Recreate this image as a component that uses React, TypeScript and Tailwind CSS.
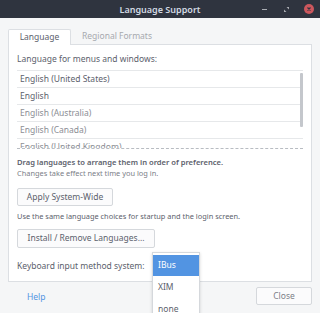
import React from "react";

const font = { fontFamily: '"Noto Sans", "Open Sans", sans-serif' };

export default function App() {
  return (
    <div className="relative w-[320px] h-[313px] overflow-hidden flex flex-col bg-[#f5f6f7] text-[#5c616c] text-[8.5px]" style={font}>
      {/* Title bar */}
      <div className="h-[18px] shrink-0 bg-[#2f343f] flex items-center relative">
        <div className="flex-1 text-center text-[9px] font-semibold text-[#d3dae3] leading-none">Language Support</div>
        <div className="absolute right-0 top-0 h-[18px] flex items-center">
          <div className="w-[5px] h-[1px] bg-[#a9acb2] mr-[17px]" />
          <svg width="5" height="5" viewBox="0 0 5 5" className="mr-[15px]">
            <path d="M0 5 L0 2.5 L2.5 5 Z M5 0 L5 2.5 L2.5 0 Z" fill="#a9acb2" />
          </svg>
          <div className="w-[10px] h-[10px] rounded-full bg-[#cc575d] flex items-center justify-center mr-[6px]">
            <svg width="6" height="6" viewBox="0 0 6 6">
              <path d="M1.5 1.5 L4.5 4.5 M4.5 1.5 L1.5 4.5" stroke="#2f343f" strokeWidth="1.2" />
            </svg>
          </div>
        </div>
      </div>

      {/* Body */}
      <div className="flex-1 flex flex-col px-[8px] pt-[11px]">
        {/* Tabs */}
        <div className="flex h-[15px] relative z-10">
          <div className="w-[63px] h-[16px] bg-white border border-b-0 border-[#dcdfe3] rounded-t-[2px] flex items-center justify-center">
            Language
          </div>
          <div className="ml-[11px] h-[15px] flex items-center text-[#a6a9ae]">Regional Formats</div>
        </div>

        {/* Panel */}
        <div className="h-[238px] shrink-0 bg-white border border-[#dcdfe3] px-[8px] pt-[8px] flex flex-col">
          <div className="h-[12px] leading-[12px] whitespace-nowrap">Language for menus and windows:</div>
          <div className="mt-[5px] h-[79px] shrink-0 overflow-hidden relative border-t border-[#e6e8ea] border-b border-b-[#b8bcc2] border-dashed" style={{ borderTopStyle: "solid" }}>
            {[
              ["English (United States)", "#5c616c"],
              ["English", "#5c616c"],
              ["English (Australia)", "#8b8e94"],
              ["English (Canada)", "#8b8e94"],
              ["English (United Kingdom)", "#8b8e94"],
            ].map(([t, c]) => (
              <div key={t} className="h-[17px] border-b border-[#e6e8ea] flex items-center pl-[3px] whitespace-nowrap" style={{ color: c }}>
                {t}
              </div>
            ))}
            <div className="absolute right-0 top-[2px] w-[3px] h-[54px] bg-[#c4c7cc] rounded-[1px]" />
          </div>

          <div className="mt-[7px] h-[12px] text-[7.6px] font-semibold leading-[12px] whitespace-nowrap">Drag languages to arrange them in order of preference.</div>
          <div className="h-[11px] text-[7.4px] leading-[11px] text-[#7c8088] whitespace-nowrap">Changes take effect next time you log in.</div>

          <div className="mt-[9px] w-[96px] h-[18px] shrink-0 border border-[#d5d8dc] rounded-[2px] bg-[#fbfbfc] flex items-center justify-center whitespace-nowrap">
            Apply System-Wide
          </div>
          <div className="mt-[5px] h-[11px] text-[7.4px] leading-[11px] whitespace-nowrap">Use the same language choices for startup and the login screen.</div>
          <div className="mt-[7px] w-[138px] h-[19px] shrink-0 border border-[#d5d8dc] rounded-[2px] bg-[#fbfbfc] flex items-center justify-center whitespace-nowrap">
            Install / Remove Languages...
          </div>

          <div className="mt-[12px] h-[12px] leading-[12px] whitespace-nowrap">Keyboard input method system:</div>
        </div>

        {/* Footer */}
        <div className="flex items-start justify-between h-[31px]">
          <span className="ml-[19px] mt-[9px] leading-[12px] text-[#5294e2]">Help</span>
          <div className="mt-[5px] w-[56px] h-[18px] border border-[#d5d8dc] rounded-[2px] bg-[#fbfbfc] flex items-center justify-center text-[#7c8088]">
            Close
          </div>
        </div>
      </div>

      {/* Popup menu */}
      <div className="absolute left-[152px] top-[252px] w-[48px] h-[70px] bg-white border border-[#d5d8dc] shadow-[0_1px_3px_rgba(0,0,0,0.15)] pt-[2px]">
        <div className="h-[21px] bg-[#5294e2] text-white flex items-center pl-[5px]">IBus</div>
        <div className="h-[22px] flex items-center pl-[5px]">XIM</div>
        <div className="h-[22px] flex items-center pl-[5px]">none</div>
      </div>
    </div>
  );
}
